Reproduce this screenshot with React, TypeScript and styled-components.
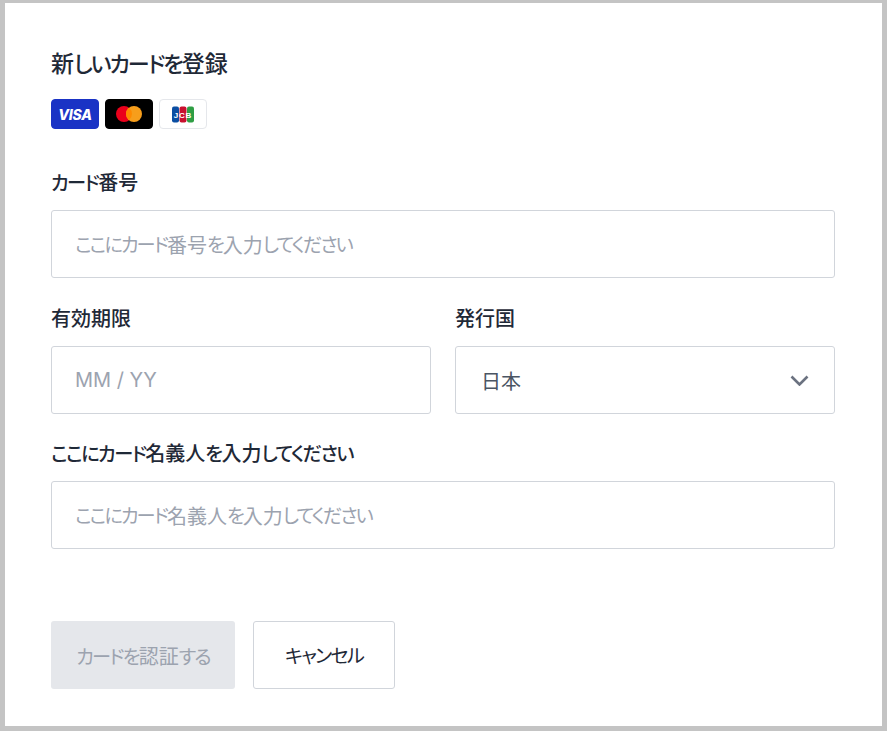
import styled, { createGlobalStyle } from "styled-components";

const GlobalStyle = createGlobalStyle`
  html, body {
    margin: 0;
    padding: 0;
    height: 100%;
    background: #c4c4c4;
  }
  body {
    font-family: Inter, "Noto Sans CJK JP", sans-serif;
    color: #1f2937;
  }
  * { box-sizing: border-box; }
`;

// the kana in the reference are much narrower than the kanji, so they get their own span
function JaText({ text }: { text: string }) {
  const runs = text.match(/[\u3040-\u30ff]+|[^\u3040-\u30ff]+/g) ?? [];
  return (
    <>
      {runs.map((run, i) =>
        /[\u3040-\u30ff]/.test(run) ? <Kana key={i}>{run}</Kana> : <span key={i}>{run}</span>
      )}
    </>
  );
}

function VisaIcon() {
  return (
    <CardBadge $bg="#1a33c5" $border="#1a33c5">
      <VisaText>VISA</VisaText>
    </CardBadge>
  );
}

function MasterIcon() {
  return (
    <CardBadge $bg="#000000" $border="#000000">
      <svg width="26" height="16" viewBox="0 0 26 16">
        <circle cx="8" cy="8" r="8" fill="#eb001b" />
        <circle cx="18" cy="8" r="8" fill="#f79e1b" />
        <path d="M13 1.8a8 8 0 0 1 0 12.4a8 8 0 0 1 0-12.4z" fill="#ff8a00" />
      </svg>
    </CardBadge>
  );
}

function JcbIcon() {
  return (
    <CardBadge $bg="#ffffff" $border="#e5e7eb">
      <svg width="22" height="17" viewBox="0 0 22 17">
        <rect x="0" y="0.5" width="7" height="16" rx="2" fill="#0b4ea2" />
        <rect x="7.5" y="0.5" width="7" height="16" rx="2" fill="#c8102e" />
        <rect x="15" y="0.5" width="7" height="16" rx="2" fill="#2f9e44" />
        <JcbLetters x="11" y="12" textAnchor="middle">JCB</JcbLetters>
      </svg>
    </CardBadge>
  );
}

function App() {
  return (
    <>
      <GlobalStyle />
      <Frame>
        <Panel>
          <Title><JaText text="新しいカードを登録" /></Title>
          <Brands>
            <VisaIcon />
            <MasterIcon />
            <JcbIcon />
          </Brands>

          <CardField>
            <Label><JaText text="カード番号" /></Label>
            <FieldBox $muted><JaText text="ここにカード番号を入力してください" /></FieldBox>
          </CardField>

          <TwoColumns>
            <div>
              <Label><JaText text="有効期限" /></Label>
              <FieldBox $muted>MM / YY</FieldBox>
            </div>
            <div>
              <Label>発行国</Label>
              <SelectBox>
                <span>日本</span>
                <svg width="19" height="11" viewBox="0 0 19 11">
                  <path d="M1.5 1.5l8 8 8-8" fill="none" stroke="#6b7280" strokeWidth="2.6" />
                </svg>
              </SelectBox>
            </div>
          </TwoColumns>

          <NameField>
            <Label><JaText text="ここにカード名義人を入力してください" /></Label>
            <FieldBox $muted><JaText text="ここにカード名義人を入力してください" /></FieldBox>
          </NameField>

          <Actions>
            <SubmitButton disabled><JaText text="カードを認証する" /></SubmitButton>
            <CancelButton><JaText text="キャンセル" /></CancelButton>
          </Actions>
        </Panel>
      </Frame>
    </>
  );
}
export default App;

const Frame = styled.div`
  height: 731px;
  padding: 3px 5px 5px;
`;

const Panel = styled.div`
  height: 100%;
  background: #ffffff;
  padding: 46px 47px 0 46px;
`;

const Kana = styled.span`
  font-size: 0.96em;
  letter-spacing: -0.09em;
  font-feature-settings: "palt";
`;

const Title = styled.h2`
  margin: 0;
  font-size: 23px;
  line-height: 30px;
  font-weight: 500;
`;

const Brands = styled.div`
  display: flex;
  gap: 6px;
  margin-top: 20px;
`;

const CardBadge = styled.div<{ $bg: string; $border: string }>`
  width: 48px;
  height: 30px;
  display: flex;
  align-items: center;
  justify-content: center;
  border-radius: 4px;
  background: ${(p) => p.$bg};
  border: 1px solid ${(p) => p.$border};
`;

const VisaText = styled.span`
  font-size: 14px;
  font-weight: 800;
  font-style: italic;
  letter-spacing: -0.2px;
  color: #ffffff;
`;

const JcbLetters = styled.text`
  font-family: "Liberation Sans", sans-serif;
  font-size: 8px;
  font-weight: 700;
  letter-spacing: 0.8px;
  fill: #ffffff;
`;

const CardField = styled.div`
  margin-top: 39px;
`;

const Label = styled.label`
  display: block;
  font-size: 20px;
  line-height: 30px;
  font-weight: 500;
  margin-bottom: 12px;
  ${Kana} {
    letter-spacing: -0.08em;
  }
`;

const FieldBox = styled.div<{ $muted?: boolean }>`
  display: flex;
  align-items: center;
  height: 68px;
  padding: 0 23px;
  border: 1px solid #d1d5db;
  border-radius: 3px;
  background: #ffffff;
  font-size: 20px;
  color: ${(p) => (p.$muted ? "#9ca3af" : "#1f2937")};
  ${Kana} {
    letter-spacing: -0.1em;
  }
`;

const TwoColumns = styled.div`
  display: grid;
  grid-template-columns: 380px 380px;
  gap: 24px;
  margin-top: 26px;
`;

const SelectBox = styled.div`
  height: 68px;
  padding: 0 25px;
  display: flex;
  align-items: center;
  justify-content: space-between;
  border: 1px solid #d1d5db;
  border-radius: 3px;
  font-size: 20px;
  color: #4b5563;
`;

const NameField = styled.div`
  margin-top: 25px;
`;

const Actions = styled.div`
  display: flex;
  gap: 18px;
  margin-top: 72px;
`;

const SubmitButton = styled.button`
  width: 184px;
  height: 68px;
  border: none;
  border-radius: 3px;
  background: #e5e7eb;
  color: #9ca3af;
  font: inherit;
  font-size: 20px;
`;

const CancelButton = styled.button`
  width: 142px;
  height: 68px;
  border: 1px solid #d1d5db;
  border-radius: 3px;
  background: #ffffff;
  color: #1f2937;
  font: inherit;
  font-size: 20px;
`;
